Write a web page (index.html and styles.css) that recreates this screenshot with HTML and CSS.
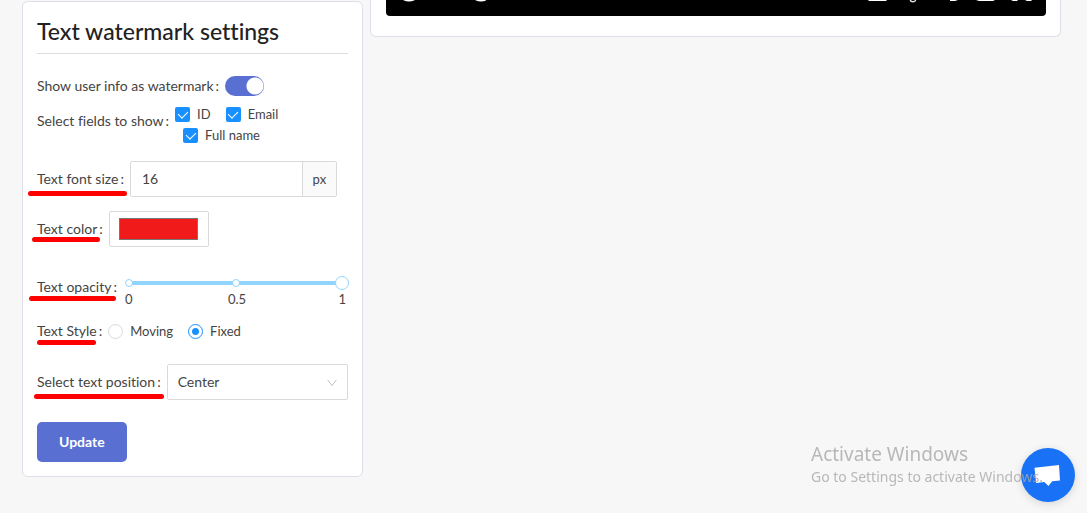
FILE: index.html
```html
<!DOCTYPE html>
<html lang="en">
<head>
<meta charset="utf-8">
<meta name="viewport" content="width=device-width, initial-scale=1">
<title>Text watermark settings</title>
<link rel="stylesheet" href="styles.css">
</head>
<body>
<main class="page">
  <form class="card settings">
    <h2 class="title">Text watermark settings</h2>

    <div class="row row-switch">
      <label class="label" for="show-info">Show user info as watermark<span class="colon">:</span></label>
      <input class="switch" type="checkbox" role="switch" id="show-info" checked>
    </div>

    <div class="row row-fields">
      <span class="label" id="fields-label">Select fields to show<span class="colon">:</span></span>
      <div class="checks" role="group" aria-labelledby="fields-label">
        <label class="choice"><input class="check" type="checkbox" checked>ID</label>
        <label class="choice"><input class="check" type="checkbox" checked>Email</label>
        <label class="choice choice-next"><input class="check" type="checkbox" checked>Full name</label>
      </div>
    </div>

    <div class="row row-size">
      <label class="label marked mark-size" for="font-size">Text font size<span class="colon">:</span></label>
      <div class="input-group">
        <input class="input" type="text" id="font-size" value="16">
        <span class="addon">px</span>
      </div>
    </div>

    <div class="row row-color">
      <label class="label marked mark-color" for="color">Text color<span class="colon">:</span></label>
      <input class="color" type="color" id="color" value="#f01a1a">
    </div>

    <div class="row row-opacity">
      <label class="label marked mark-opacity" for="opacity">Text opacity<span class="colon">:</span></label>
      <div class="slider">
        <div class="track">
          <input class="range" type="range" id="opacity" min="0" max="1" step="0.1" value="1">
          <span class="dot dot-start"></span>
          <span class="dot dot-middle"></span>
        </div>
        <div class="ticks"><span>0</span><span>0.5</span><span>1</span></div>
      </div>
    </div>

    <div class="row row-style">
      <span class="label marked mark-style" id="style-label">Text Style<span class="colon">:</span></span>
      <div class="radios" role="radiogroup" aria-labelledby="style-label">
        <label class="choice"><input class="radio" type="radio" name="style">Moving</label>
        <label class="choice"><input class="radio" type="radio" name="style" checked>Fixed</label>
      </div>
    </div>

    <div class="row row-position">
      <label class="label marked mark-position" for="position">Select text position<span class="colon">:</span></label>
      <div class="select-wrap">
        <select class="select" id="position"><option>Center</option></select>
        <svg class="chevron" viewBox="0 0 10 8" aria-hidden="true"><path d="M.7 1 5 6.6 9.3 1" fill="none" stroke="#bfbfbf"/></svg>
      </div>
    </div>

    <button class="update" type="button">Update</button>
  </form>

  <section class="card preview">
    <div class="player">
      <svg class="player-left" viewBox="0 0 90 4" aria-hidden="true"><g fill="#fff"><ellipse cx="13" cy="-2" rx="7" ry="3.5"/><ellipse cx="85" cy="-2" rx="7" ry="3.5"/></g></svg>
      <svg class="player-right" viewBox="0 0 170 4" aria-hidden="true"><g fill="#fff"><path d="M2 0h19l-1 1H3zM84 0h8l-3 1h-5zM110 0h19l-2 1h-14zM145 0h7l-1 1h-4zM159 0h6l1 1h-5z"/></g><circle cx="47" cy="-1" r="2.8" fill="none" stroke="#ddd" stroke-width="1.4"/></svg>
    </div>
  </section>
</main>

<button class="chat" type="button" aria-label="Open chat">
  <svg viewBox="0 0 54 54" aria-hidden="true"><path d="M13.500 19.800 38 17l1 15.500-7.800.8L27.500 38l-4.200-3.900-8.200.8z" fill="#fff"/></svg>
</button>
<aside class="activate">
  <p class="activate-title">Activate Windows</p>
  <p class="activate-text">Go to Settings to activate Windows.</p>
</aside>
</body>
</html>
```
FILE: styles.css
```css
* { box-sizing: border-box; }
body {
  margin: 0;
  background: #f7f7f7;
  color: #444;
  font: 13px/20px Lato, "Open Sans", sans-serif;
  font-variant-ligatures: none;
}
input, select, button { font: inherit; color: inherit; margin: 0; }

.page {
  display: grid;
  grid-template-columns: minmax(0, 341fr) minmax(0, 691fr);
  gap: 7px;
  align-items: start;
  padding: 0 26px 0 22px;
}
.card { background: #fff; border: 1px solid #dedfe8; border-radius: 6px; }

.settings { margin-top: 1px; padding: 14px; }
.title {
  margin: 0;
  padding-bottom: 6px;
  border-bottom: 1px solid #dcdde2;
  color: #222;
  font-size: 23px;
  line-height: 31px;
  font-weight: 500;
}
.row { display: flex; align-items: center; gap: 6px; }
.label { position: relative; flex: none; white-space: nowrap; font-size: 14px; }
.colon { margin-left: 2px; }

.marked::after {
  content: "";
  position: absolute;
  height: 5px;
  border-radius: 3px;
  background: #f00;
}
.mark-size::after { left: -9px; right: -3px; top: 22px; }
.mark-color::after { left: -5px; right: 3px; top: 18px; }
.mark-opacity::after { left: -8px; right: 1px; top: 19px; }
.mark-style::after { left: 0; right: 6px; top: 19px; }
.mark-position::after { left: -3px; right: -3px; top: 22px; }

.row-switch { margin-top: 22px; }
.switch {
  appearance: none;
  width: 39px;
  height: 20px;
  border-radius: 10px;
  background: radial-gradient(circle at 30px 10px, #fff 8px, transparent 9px) #596fd2;
}

.row-fields { align-items: flex-start; margin-top: 8px; }
.row-fields .label { margin-top: 7px; }
.checks, .radios { display: flex; flex-wrap: wrap; column-gap: 15px; row-gap: 1px; }
.checks { flex: 0 0 124px; }
.choice { display: flex; align-items: center; gap: 7px; }
.choice-next { margin-left: 8px; }
.check {
  appearance: none;
  display: grid;
  place-items: center;
  width: 15px;
  height: 15px;
  border-radius: 2px;
  background: #1890ff;
}
.check::after {
  content: "";
  width: 5px;
  height: 8px;
  margin-bottom: 2px;
  border: solid #fff;
  border-width: 0 1px 1px 0;
  rotate: 45deg;
}

.row-size { margin-top: 16px; }
.input-group { display: flex; flex: 0 1 207px; min-width: 0; height: 36px; border: 1px solid #d9d9d9; border-radius: 2px; }
.input { flex: 1; min-width: 0; padding: 0 11px; border: 0; background: none; font-size: 14px; }
.addon { flex: none; width: 34px; border-left: 1px solid #d9d9d9; background: #fafafa; line-height: 34px; text-align: center; }

.row-color { margin-top: 14px; }
.color {
  appearance: none;
  width: 100px;
  height: 36px;
  padding: 6px 10px 6px 9px;
  border: 1px solid #d9d9d9;
  border-radius: 2px;
  background: #fff;
}
.color::-webkit-color-swatch-wrapper { padding: 0; }
.color::-webkit-color-swatch { border: 1px solid #777; border-radius: 0; }

.row-opacity { align-items: flex-start; margin-top: 27px; }
.row-opacity .label { margin-top: 3px; }
.slider { flex: 1; min-width: 0; margin: 0 -1px 0 2px; padding-top: 2px; }
.track { position: relative; display: flex; align-items: center; height: 14px; }
.range { appearance: none; flex: 1; min-width: 0; height: 14px; background: linear-gradient(#91d5ff, #91d5ff) 4px 5px / calc(100% - 10px) 4px no-repeat; }
.range::-webkit-slider-thumb { appearance: none; width: 14px; height: 14px; border: 1px solid #91d5ff; border-radius: 50%; background: #fff; }
.dot { position: absolute; top: 3px; width: 8px; height: 8px; border: 1px solid #91d5ff; border-radius: 50%; background: #fff; }
.dot-start { left: 0; }
.dot-middle { left: calc(50% - 5px); }
.ticks { display: grid; grid-template-columns: 1fr 1fr 1fr; line-height: 18px; }
.ticks span:nth-child(2) { text-align: center; }
.ticks span:nth-child(3) { padding-right: 3px; text-align: right; }

.row-style { margin-top: 13px; }
.radio {
  appearance: none;
  width: 15px;
  height: 15px;
  border: 1px solid #d9d9d9;
  border-radius: 50%;
}
.radio:checked { border-color: #1890ff; background: radial-gradient(circle, #1890ff 3px, transparent 4px); }

.row-position { margin-top: 23px; }
.select-wrap { position: relative; flex: 1; }
.select {
  appearance: none;
  display: block;
  width: 100%;
  height: 36px;
  padding: 0 10px;
  border: 1px solid #d9d9d9;
  border-radius: 2px;
  background: #fff;
  font-size: 14px;
}
.chevron { position: absolute; right: 11px; top: 15px; width: 10px; height: 8px; pointer-events: none; }

.update {
  display: block;
  height: 40px;
  margin-top: 22px;
  padding: 0 22px;
  border: 0;
  border-radius: 5px;
  background: #596fd2;
  color: #fff;
  font-size: 14px;
  font-weight: 700;
}

.preview { padding: 0 14px 20px 15px; border-top: 0; border-radius: 0 0 6px 6px; }
.player { display: flex; justify-content: space-between; height: 16px; border-radius: 0 0 4px 4px; background: #000; padding: 0 10px; }
.player svg { height: 4px; }
.player-left { width: 90px; }
.player-right { width: 170px; }

.chat {
  position: fixed;
  right: 12px;
  bottom: 11px;
  width: 54px;
  height: 54px;
  padding: 0;
  border: 0;
  border-radius: 50%;
  background: #1972f5;
  box-shadow: 0 2px 8px #0002;
}
.chat svg { display: block; width: 54px; height: 54px; }
.activate {
  position: fixed;
  right: 40px;
  bottom: 26px;
  width: 236px;
  color: #a8a8a8cc;
  font-family: "Noto Sans", "Open Sans", sans-serif;
  pointer-events: none;
  white-space: nowrap;
}
.activate p { margin: 0; }
.activate-title { font-size: 19px; line-height: 26px; }
.activate-text { font-size: 14px; line-height: 20px; }
```
